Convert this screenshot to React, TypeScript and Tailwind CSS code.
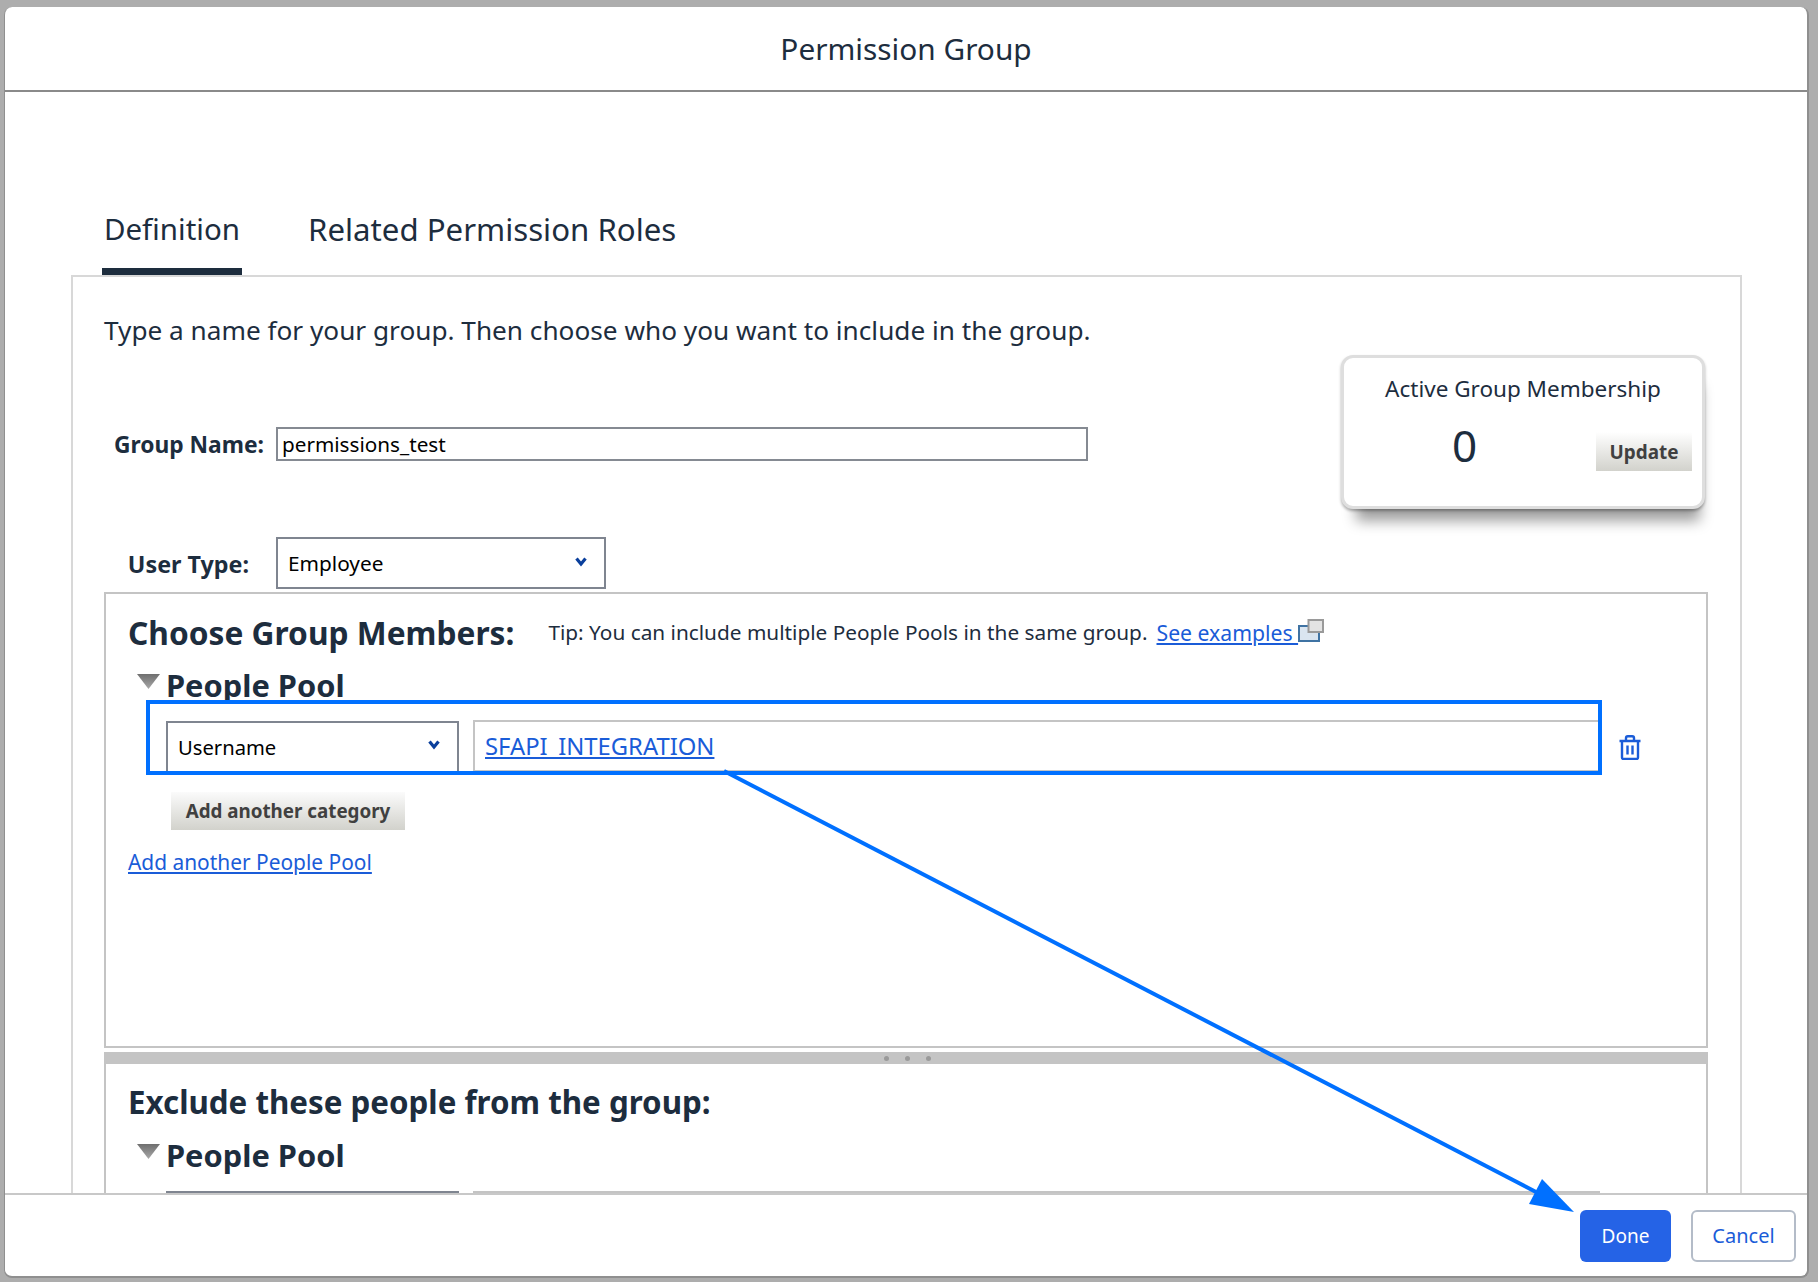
const TriangleIcon = () => (
  <svg width="23" height="15" viewBox="0 0 23 15" className="shrink-0">
    <defs>
      <linearGradient id="tri" x1="0" y1="0" x2="0" y2="1">
        <stop offset="0" stopColor="#6f6f6f" />
        <stop offset="1" stopColor="#a8a8a8" />
      </linearGradient>
    </defs>
    <path d="M0 0H23L11.5 15Z" fill="url(#tri)" />
  </svg>
);

const Chevron = () => (
  <svg width="14" height="10" viewBox="0 0 14 10" className="shrink-0 -mt-[4px]">
    <path d="M2.500 1.500L7 7L11.500 1.500" fill="none" stroke="#0a3f9c" strokeWidth="3.200" />
  </svg>
);

const TrashIcon = () => (
  <svg width="22" height="25" viewBox="0 0 22 25" className="shrink-0">
    <path
      d="M0.500 6H21.500M3 6V22.500Q3 24 4.500 24H17.500Q19 24 19 22.500V6M7 6V3Q7 1.200 8.800 1.200H13.200Q15 1.200 15 3V6M8.500 10.500V19.500M13.500 10.500V19.500"
      fill="none"
      stroke="#1a5cd8"
      strokeWidth="2.400"
    />
  </svg>
);

const ExternalIcon = () => (
  <svg width="26" height="23" viewBox="0 0 26 23" className="shrink-0 -mt-[5px]">
    <rect x="1" y="7" width="20" height="15" fill="#dae5f0" stroke="#3f73a3" strokeWidth="2" />
    <rect x="10.500" y="1" width="14.500" height="12" fill="#e3e3e3" stroke="#9a9a9a" strokeWidth="2" />
  </svg>
);

const People = () => (
  <div className="flex items-start h-[30px] pl-[31px]">
    <div className="pt-[4px] w-[29px]">
      <TriangleIcon />
    </div>
    <span className="text-[#1d2d3e] text-[30.800px] leading-[30px] font-bold">People Pool</span>
  </div>
);

const App = () => {
  return (
    <div
      className="relative w-[1818px] h-[1282px] bg-[#adadad] pt-[7px] pl-[4px] overflow-hidden text-[#1d2d3e]"
      style={{ fontFamily: '"Noto Sans", sans-serif' }}
    >
      {/* Modal */}
      <div className="w-[1805px] h-[1271px] bg-white rounded-lg border-l border-r-2 border-b-2 border-[#8f8f8f] flex flex-col overflow-hidden">

        <div className="h-[85px] shrink-0 border-b-2 border-[#8a8a8a] flex items-center justify-center pt-[1px]">
          <h1 className="text-[29.800px] font-normal">Permission Group</h1>
        </div>

        {/* Body */}
        <div className="flex-1 min-h-0 overflow-hidden pl-[66px] pr-[65px]">

          {/* Tabs */}
          <div className="h-[183px] flex items-end pl-[31px] gap-[66px]">
            <div className="w-[140px] h-[82px] border-b-[7px] border-[#1d2d3e] flex justify-center pt-[14px]">
              <span className="text-[29.500px] leading-[44px]">Definition</span>
            </div>
            <div className="h-[82px] pt-[14px]">
              <span className="text-[31.200px] leading-[44px]">Related Permission Roles</span>
            </div>
          </div>

          {/* Panel */}
          <div className="border-2 border-[#d8d8d8] pl-[31px] pr-[32px] h-[1000px]">
            <p className="pt-[36px] text-[26.200px] leading-[34px]">
              Type a name for your group. Then choose who you want to include in the group.
            </p>

            <div className="flex justify-between items-start h-[237px] mt-[8px] mr-[3px]">
              <div>
                <div className="flex items-center h-[34px] mt-[72px]">
                  <label className="w-[172px] pr-3 pt-[2px] text-right text-[22.800px] font-bold">Group Name:</label>
                  <div className="w-[812px] h-[34px] border-2 border-[#858a92] flex items-center pl-[4px] pt-[1px] text-[20.700px] text-black">
                    permissions_test
                  </div>
                </div>
                <div className="flex items-center h-[51px] mt-[76px]">
                  <label className="w-[172px] pr-[27px] pt-[3px] text-right text-[23.300px] font-bold">User Type:</label>
                  <div className="w-[330px] h-[52px] border-2 border-[#7f8590] flex items-center justify-between pl-[10px] pr-[16px] pt-[2px] text-[20.800px] text-black">
                    Employee
                    <Chevron />
                  </div>
                </div>
              </div>

              {/* Membership card */}
              <div className="w-[364px] h-[154px] rounded-xl border-[3px] border-[#dedede] bg-white shadow-[0_2px_3px_rgba(0,0,0,0.3),5px_22px_14px_-10px_rgba(0,0,0,0.38)] flex flex-col">
                <div className="text-center text-[22.500px] leading-[30px] pt-[16px]">Active Group Membership</div>
                <div className="flex items-start justify-between pr-[10px] mt-[16px]">
                  <span className="w-[241px] text-center text-[44px] leading-[50px]">0</span>
                  <button className="w-[96px] h-[39px] mt-[12px] pt-[1px] bg-gradient-to-b from-[#ffffff] to-[#d2d2cc] text-[18.900px] font-bold text-[#404040]">
                    Update
                  </button>
                </div>
              </div>
            </div>

            {/* Group members */}
            <div className="h-[456px] border-2 border-[#c4c4c4] pt-[19px]">
              <div className="flex items-center h-[40px] pl-[22px]">
                <h2 className="text-[31.700px] font-bold">Choose Group Members:</h2>
                <span className="ml-[34px] text-[20.800px]">Tip: You can include multiple People Pools in the same group.</span>
                <a className="ml-[9px] text-[21.200px] text-[#1a5cd8] underline whitespace-pre">See examples </a>
                <ExternalIcon />
              </div>
              <div className="mt-[17px]">
                <People />
              </div>

              {/* Criteria row */}
              <div className="relative h-[75px] ml-[40px] w-[1456px]">
                <div className="absolute inset-0 border-4 border-[#0070ff] z-10" />
                <div className="flex items-start pt-[21px] pl-[20px] pr-[1px] h-full">
                  <div className="w-[293px] h-[52px] border-2 border-[#7f8590] flex items-center justify-between pl-[10px] pr-[16px] text-[20.200px] text-black">
                    Username
                    <Chevron />
                  </div>
                  <div className="flex-1 ml-[14px] h-[52px] border-2 border-[#c4c4c4] pl-[10px] pt-[2px] flex items-center -mt-[1px]">
                    <a className="text-[23.800px] text-[#1a5cd8] underline">SFAPI_INTEGRATION</a>
                  </div>
                </div>
                <div className="absolute left-[1473px] top-[35px]">
                  <TrashIcon />
                </div>
              </div>

              <button className="block ml-[65px] mt-[17px] w-[234px] h-[38px] bg-gradient-to-b from-[#fbfbfb] to-[#d2d2cc] text-[18.800px] font-bold text-[#404040]">
                Add another category
              </button>
              <a className="block ml-[22px] mt-[15px] text-[20.900px] leading-[34px] text-[#1a5cd8] underline">
                Add another People Pool
              </a>
            </div>

            {/* Splitter */}
            <div className="mt-[4px] h-[12px] bg-[#c4c4c4] flex justify-center items-center gap-[16px] pl-[3px]">
              <span className="w-[5px] h-[5px] rounded-full bg-[#9a9a9a]" />
              <span className="w-[5px] h-[5px] rounded-full bg-[#9a9a9a]" />
              <span className="w-[5px] h-[5px] rounded-full bg-[#9a9a9a]" />
            </div>

            {/* Exclude */}
            <div className="h-[300px] border-x-2 border-[#c4c4c4] pt-[18px]">
              <h2 className="pl-[22px] text-[31.300px] leading-[40px] font-bold">Exclude these people from the group:</h2>
              <div className="mt-[18px]">
                <People />
              </div>
              <div className="flex items-start pt-[21px] pl-[60px] pr-[106px]">
                <div className="w-[293px] h-[52px] border-2 border-[#7f8590]" />
                <div className="flex-1 ml-[14px] h-[52px] border-2 border-[#c4c4c4]" />
              </div>
            </div>
          </div>
        </div>

        {/* Footer */}
        <div className="h-[83px] shrink-0 border-t-2 border-[#c8c8c8] flex items-start justify-end pt-[15px] pr-[11px] gap-[20px]">
          <button className="w-[91px] h-[52px] rounded-[6px] bg-[#2563e6] text-white text-[19px]">Done</button>
          <button className="w-[105px] h-[52px] rounded-[6px] border-2 border-[#b4bcc8] bg-white text-[#1a5cd8] text-[20px]">Cancel</button>
        </div>
      </div>

      {/* Annotation arrow */}
      <svg className="absolute left-0 top-0 pointer-events-none" width="1818" height="1282" viewBox="0 0 1818 1282">
        <path d="M724 771L1536 1192" stroke="#0070ff" strokeWidth="4" fill="none" />
        <path d="M1574 1212L1542 1179L1529 1204Z" fill="#0070ff" />
      </svg>
    </div>
  );
};

export default App;
